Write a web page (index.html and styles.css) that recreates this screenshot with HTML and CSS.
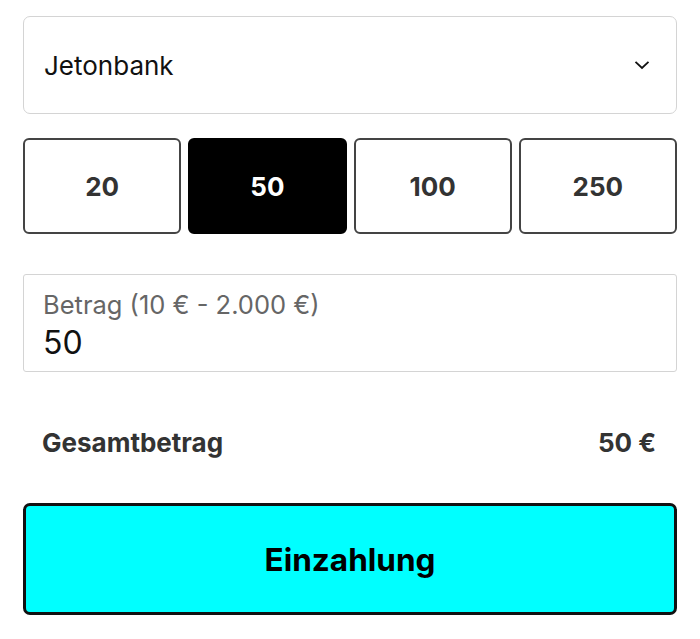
FILE: index.html
```html
<!DOCTYPE html>
<html lang="de">
<head>
<meta charset="utf-8">
<link rel="stylesheet" href="styles.css">
</head>
<body>
<div class="form">
  <div class="select">
    <span class="select-text">Jetonbank</span>
    <svg class="chevron" width="16" height="10" viewBox="0 0 16 10"><path d="M1.5 1.8 L8 8 L14.5 1.8" fill="none" stroke="#111" stroke-width="1.8"/></svg>
  </div>
  <div class="amounts">
    <div class="amount">20</div>
    <div class="amount active">50</div>
    <div class="amount">100</div>
    <div class="amount">250</div>
  </div>
  <div class="field">
    <div class="field-label">Betrag (10 € - 2.000 €)</div>
    <div class="field-value">50</div>
  </div>
  <div class="total">
    <span>Gesamtbetrag</span>
    <span>50 €</span>
  </div>
  <button class="submit">Einzahlung</button>
</div>
</body>
</html>
```
FILE: styles.css
```css
html, body {
  margin: 0;
  padding: 0;
  background: #fff;
}
body {
  font-family: Inter, "Noto Sans", sans-serif;
  color: #111;
}
.form {
  width: 654px;
  margin: 0 auto;
  padding-top: 16px;
  display: flex;
  flex-direction: column;
}
.select {
  box-sizing: border-box;
  height: 98px;
  border: 1.5px solid #d4d4d4;
  border-radius: 7px;
  display: flex;
  align-items: center;
  justify-content: space-between;
  padding: 0 26px 0 20px;
}
.select-text {
  font-size: 26px;
  color: #111;
}
.chevron {
  display: block;
}
.amounts {
  margin-top: 24px;
  display: grid;
  grid-template-columns: repeat(4, 1fr);
  gap: 7px;
}
.amount {
  box-sizing: border-box;
  height: 96px;
  border: 2.5px solid #444;
  border-radius: 6px;
  display: flex;
  align-items: center;
  justify-content: center;
  font-size: 26px;
  font-weight: 700;
  color: #333;
}
.amount.active {
  background: #000;
  border-color: #000;
  color: #fff;
}
.field {
  box-sizing: border-box;
  margin-top: 40px;
  height: 98px;
  border: 1.5px solid #d4d4d4;
  border-radius: 3px;
  padding: 15px 19px 0;
}
.field-label {
  font-size: 25.5px;
  color: #666;
  line-height: 30px;
}
.field-value {
  font-size: 32px;
  color: #111;
  line-height: 46px;
}
.total {
  margin-top: 56px;
  padding: 0 21px 0 19px;
  display: flex;
  justify-content: space-between;
  font-size: 26px;
  font-weight: 700;
  color: #333;
  line-height: 30px;
}
.submit {
  box-sizing: border-box;
  margin-top: 45px;
  height: 112px;
  width: 100%;
  background: #00ffff;
  border: 3px solid #111;
  border-radius: 7px;
  font-family: Inter, "Noto Sans", sans-serif;
  font-size: 31.5px;
  font-weight: 700;
  color: #000;
  padding: 0;
}
```
